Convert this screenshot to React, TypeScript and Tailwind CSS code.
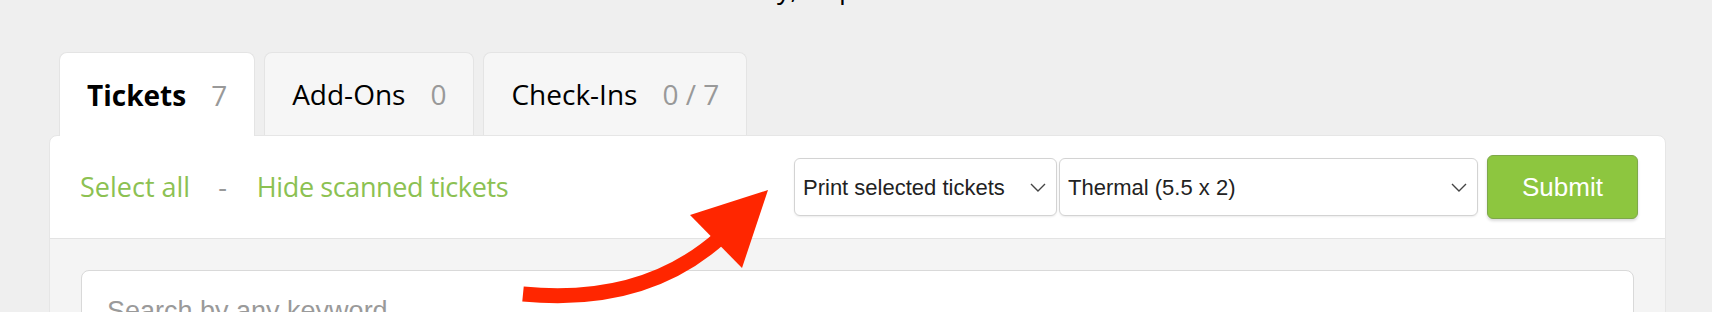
import React from "react";

const tabs = [
  { label: "Tickets", count: "7", active: true },
  { label: "Add-Ons", count: "0", active: false },
  { label: "Check-Ins", count: "0 / 7", active: false },
];

function Chevron() {
  return (
    <svg width="16" height="9" viewBox="0 0 16 9" fill="none" className="shrink-0">
      <path d="M1 1l7 7 7-7" stroke="#444" strokeWidth="1.4" />
    </svg>
  );
}

function FakeSelect({ value, width }: { value: string; width: string }) {
  return (
    <div
      className={`${width} h-[58px] flex items-center justify-between pl-[8px] pr-[10px] bg-white border border-[#d3d3d3] rounded-[6px] shadow-[0_1px_2px_rgba(0,0,0,0.08)] text-[22px] text-[#222] font-['Liberation_Sans',Arial,sans-serif]`}
    >
      <span className="whitespace-nowrap">{value}</span>
      <Chevron />
    </div>
  );
}

export default function App() {
  return (
    <div className="relative w-[1712px] h-[312px] overflow-hidden bg-[#efefef] font-['Open_Sans',sans-serif]">
      {/* intro line, mostly scrolled off */}
      <p className="-mt-[30px] leading-[36px] text-[27px] text-black text-center pr-[150px]">
        Check in tickets individually, or print them all at once.
      </p>

      <div className="mt-[46px] pl-[49px] pr-[46px]">
        {/* tabs */}
        <div className="flex gap-[9px] pl-[10px]">
          {tabs.map((t) => (
            <div
              key={t.label}
              className={`h-[83px] flex items-center gap-[25px] px-[27px] rounded-t-[8px] border border-b-0 text-[28px] ${
                t.active
                  ? "bg-white border-[#e4e4e4] font-bold text-black relative z-10 -mb-px h-[84px]"
                  : "bg-[#f6f6f6] border-[#e4e4e4] text-black"
              }`}
            >
              <span>{t.label}</span>
              <span className="font-normal text-[#999]">{t.count}</span>
            </div>
          ))}
        </div>

        {/* panel */}
        <div className="bg-white border border-[#e6e6e6] rounded-[8px] overflow-hidden">
          <div className="h-[103px] flex items-center justify-between pl-[30px] pr-[27px] border-b border-[#e3e3e3]">
            <div className="flex items-center text-[27px] text-[#8cc152]">
              <span>Select all</span>
              <span className="ml-[28px] mr-[30px] text-[#999]">-</span>
              <span className="tracking-[-0.4px]">Hide scanned tickets</span>
            </div>
            <div className="flex items-center">
              <FakeSelect value="Print selected tickets" width="w-[263px]" />
              <div className="w-[2px]" />
              <FakeSelect value="Thermal (5.5 x 2)" width="w-[419px]" />
              <button className="ml-[9px] w-[151px] h-[64px] rounded-[6px] bg-[#8dc63f] border border-[#7ea84a] shadow-[0_2px_3px_rgba(0,0,0,0.15)] text-white text-[26px] font-['Liberation_Sans',Arial,sans-serif]">
                Submit
              </button>
            </div>
          </div>
          <div className="bg-[#f4f4f4] pt-[31px] px-[31px] pb-[40px]">
            <div className="h-[80px] bg-white border border-[#d9d9d9] rounded-[8px] pl-[25px] pt-[20px] text-[27px] text-[#9a9a9a] font-['Liberation_Sans',Arial,sans-serif]">
              Search by any keyword
            </div>
          </div>
        </div>
      </div>

      {/* annotation arrow */}
      <svg
        className="absolute left-0 top-0 pointer-events-none"
        width="1712"
        height="312"
        viewBox="0 0 1712 312"
      >
        <path d="M523 294 Q645 306 722 236" stroke="#ff2600" strokeWidth="15" fill="none" />
        <polygon points="768,190 690,215 742,268" fill="#ff2600" />
      </svg>
    </div>
  );
}
